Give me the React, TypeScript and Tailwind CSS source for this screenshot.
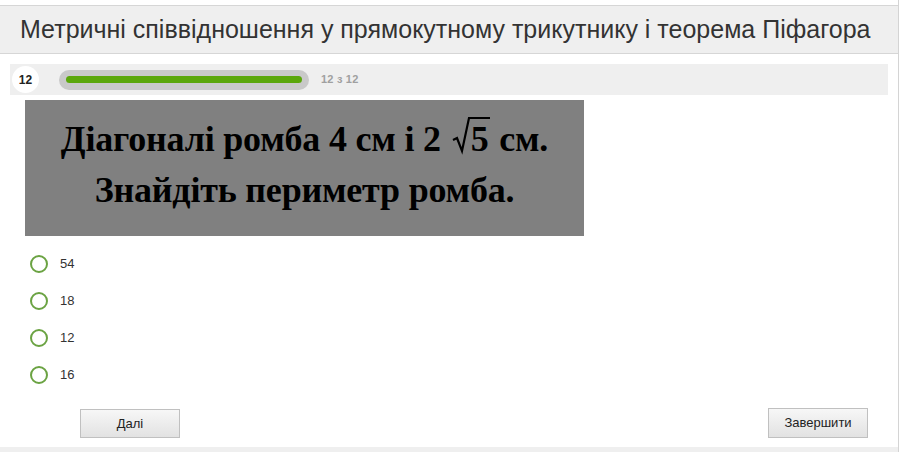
import React from 'react'

const answers = ['54', '18', '12', '16']

export default function App() {
  return (
    <div className="w-[901px] h-[452px] bg-white overflow-hidden font-['Liberation_Sans',Arial,sans-serif] text-[#333]">
      <div className="w-[899px] h-full border-r border-[#d4d4d4] flex flex-col pt-[5px]">
        <div className="h-[49px] bg-[#efefef] border-t border-b border-[#d6d6d6] flex items-center pl-[20px]">
          <h1 className="text-[25px] leading-none text-[#333]">
            Метричні співвідношення у прямокутному трикутнику і теорема Піфагора
          </h1>
        </div>

        <div className="mt-[10px] ml-[10px] mr-[10px] h-[31px] bg-[#efefef] flex items-center">
          <div className="ml-[2px] w-[27px] h-[27px] rounded-full bg-white flex items-center justify-center text-[12px] font-bold text-[#222]">
            12
          </div>
          <div className="ml-[20px] w-[250px] h-[20px] rounded-full bg-[#c9c9c9] flex items-center px-[7px]">
            <div className="w-full h-[7px] rounded-full bg-[#5ba70b]" />
          </div>
          <span className="ml-[12px] text-[11px] font-bold text-[#a0a0a0] tracking-[0.2px]">12 з 12</span>
        </div>

        <div className="mt-[5px] ml-[25px] w-[559px] h-[136px] pb-[6px] bg-[#808080] flex flex-col items-center justify-center font-['Liberation_Serif','Times_New_Roman',serif] font-bold text-black text-[36px] leading-[51px] tracking-[-0.2px]">
          <div className="flex items-end">
            <span>Діагоналі ромба 4 см і 2&nbsp;</span>
            <span className="flex items-end ml-[2px]">
              <svg width="19" height="40" viewBox="0 0 19 40" className="mb-[9px]">
                <path d="M1 24 L5 22 L10 35 L17 2 L19 2" fill="none" stroke="black" strokeWidth="2.2" strokeLinejoin="miter" />
              </svg>
              <span className="border-t-[2px] border-black leading-[40px] mb-[6px] pr-[2px]">5</span>
            </span>
            <span>&nbsp;см.</span>
          </div>
          <div>Знайдіть периметр ромба.</div>
        </div>

        <div className="mt-[19px] ml-[30px] flex flex-col gap-[20px]">
          {answers.map((a) => (
            <label key={a} className="flex items-center h-[17px]">
              <span className="w-[18px] h-[18px] rounded-full border-2 border-[#6ba343] bg-white" />
              <span className="ml-[12px] text-[13px] text-[#333]">{a}</span>
            </label>
          ))}
        </div>

        <div className="mt-[25px] flex justify-between pl-[80px] pr-[30px]">
          <button className="w-[100px] h-[29px] mt-[1px] border border-[#c0c0c0] bg-gradient-to-b from-[#f7f7f7] to-[#e2e2e2] text-[13px] text-[#222]">
            Далі
          </button>
          <button className="w-[100px] h-[30px] border border-[#c0c0c0] bg-gradient-to-b from-[#f7f7f7] to-[#e2e2e2] text-[13px] text-[#222]">
            Завершити
          </button>
        </div>

        <div className="mt-auto h-[5px] bg-[#efefef]" />
      </div>
    </div>
  )
}
